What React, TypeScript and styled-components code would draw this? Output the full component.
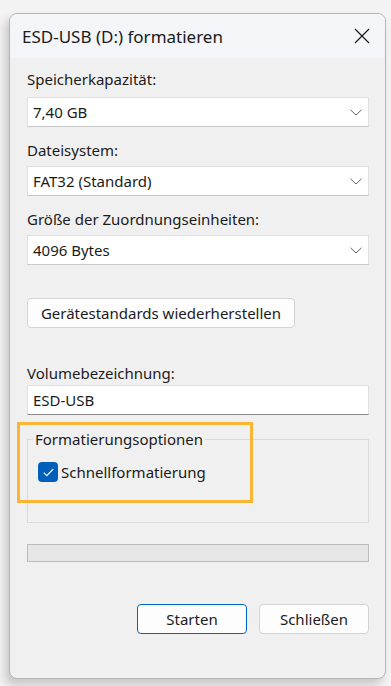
import React from 'react';
import styled, { createGlobalStyle } from 'styled-components';

const GlobalStyle = createGlobalStyle`
  html, body {
    margin: 0;
    padding: 0;
    background: #f3f3f3;
    font-family: "Noto Sans", "Open Sans", sans-serif;
    color: #1b1b1b;
  }
`;

const Page = styled.div`
  width: 391px;
  height: 686px;
  overflow: hidden;
  padding: 13px 5px 0 9px;
  box-sizing: border-box;
`;

const Window = styled.div`
  position: relative;
  width: 377px;
  height: 666px;
  box-sizing: border-box;
  border: 1px solid #b4b4b4;
  border-radius: 8px;
  background: #f0f0f0;
  box-shadow: -4px 6px 10px rgba(0, 0, 0, 0.18);
  overflow: hidden;
  display: flex;
  flex-direction: column;
`;

const TitleBar = styled.div`
  height: 44px;
  display: flex;
  align-items: center;
  justify-content: space-between;
  padding: 0 15px 0 12px;
  background: #f3f5f9;
`;

const Title = styled.span`
  font-size: 17px;
`;

const CloseButton = styled.button`
  border: 0;
  background: none;
  padding: 0;
  width: 16px;
  height: 16px;
  display: flex;
`;

const Body = styled.div`
  flex: 1;
  display: flex;
  flex-direction: column;
  padding: 11px 16px 0 17px;
`;

const Label = styled.div<{ $gap?: number; $top?: number }>`
  font-size: 15px;
  line-height: 20px;
  margin-top: ${(p) => p.$top ?? 0}px;
  margin-bottom: ${(p) => p.$gap ?? 7}px;
`;

const Select = styled.div`
  height: 30px;
  box-sizing: border-box;
  background: #fff;
  border: 1px solid #e0e0e0;
  border-bottom-color: #c8c8c8;
  display: flex;
  align-items: center;
  justify-content: space-between;
  padding: 0 6px 0 5px;
  font-size: 15px;
`;

const TextInput = styled(Select)`
  border-bottom-color: #8a8a8a;
`;

const Button = styled.button<{ $primary?: boolean }>`
  height: 30px;
  box-sizing: border-box;
  background: #fdfdfd;
  border: 1px solid ${(p) => (p.$primary ? '#0067c0' : '#d4d4d4')};
  border-radius: 4px;
  font-family: inherit;
  font-size: 15px;
  color: #1b1b1b;
  padding: 0;
`;

const ResetButton = styled(Button)`
  width: 268px;
  margin-top: 33px;
`;

const Group = styled.fieldset`
  margin: 14px 0 0;
  padding: 13px 10px 40px;
  border: 1px solid #dadada;
  min-width: 0;
`;

const Legend = styled.legend`
  font-size: 15px;
  line-height: 20px;
  padding: 0 2px;
  margin-left: -5px;
`;

const CheckRow = styled.label`
  display: flex;
  align-items: center;
  gap: 3px;
  font-size: 15px;
`;

const CheckBox = styled.span`
  width: 20px;
  height: 20px;
  border-radius: 4px;
  background: #005fb8;
  display: flex;
  align-items: center;
  justify-content: center;
`;

const Progress = styled.div`
  margin-top: 21px;
  height: 18px;
  box-sizing: border-box;
  border: 1px solid #bcbcbc;
  background: #e6e6e6;
`;

const Actions = styled.div`
  display: flex;
  justify-content: flex-end;
  gap: 12px;
  margin-top: 42px;
`;

const ActionButton = styled(Button)`
  width: 110px;
`;

const Highlight = styled.div`
  position: absolute;
  left: 7px;
  top: 408px;
  width: 236px;
  height: 81px;
  box-sizing: border-box;
  border: 3px solid #fbb534;
  pointer-events: none;
`;

const Chevron = () => (
  <svg width="12" height="7" viewBox="0 0 12 7" fill="none">
    <path d="M0.5 0.8 L6 6 L11.5 0.8" stroke="#606060" strokeWidth="1" />
  </svg>
);

const fields = [
  { label: 'Speicherkapazität:', value: '7,40 GB' },
  { label: 'Dateisystem:', value: 'FAT32 (Standard)' },
  { label: 'Größe der Zuordnungseinheiten:', value: '4096 Bytes' },
];

export default function App() {
  return (
    <Page>
      <GlobalStyle />
      <Window>
        <TitleBar>
          <Title>ESD-USB (D:) formatieren</Title>
          <CloseButton aria-label="Schließen">
            <svg width="16" height="16" viewBox="0 0 16 16">
              <path d="M1 1 L15 15 M15 1 L1 15" stroke="#1b1b1b" strokeWidth="1.2" />
            </svg>
          </CloseButton>
        </TitleBar>
        <Body>
          {fields.map((f, i) => (
            <React.Fragment key={f.label}>
              <Label $top={i === 0 ? 0 : 13} $gap={i === 0 ? 8 : 6}>{f.label}</Label>
              <Select>
                <span>{f.value}</span>
                <Chevron />
              </Select>
            </React.Fragment>
          ))}
          <ResetButton>Gerätestandards wiederherstellen</ResetButton>
          <Label $top={35} $gap={2}>Volumebezeichnung:</Label>
          <TextInput>ESD-USB</TextInput>
          <Group>
            <Legend>Formatierungsoptionen</Legend>
            <CheckRow>
              <CheckBox>
                <svg width="11" height="9" viewBox="0 0 11 9" fill="none">
                  <path d="M0.8 4.6 L3.8 7.6 L10.2 1" stroke="#fff" strokeWidth="1.1" />
                </svg>
              </CheckBox>
              Schnellformatierung
            </CheckRow>
          </Group>
          <Progress />
          <Actions>
            <ActionButton $primary>Starten</ActionButton>
            <ActionButton>Schließen</ActionButton>
          </Actions>
        </Body>
        <Highlight />
      </Window>
    </Page>
  );
}
